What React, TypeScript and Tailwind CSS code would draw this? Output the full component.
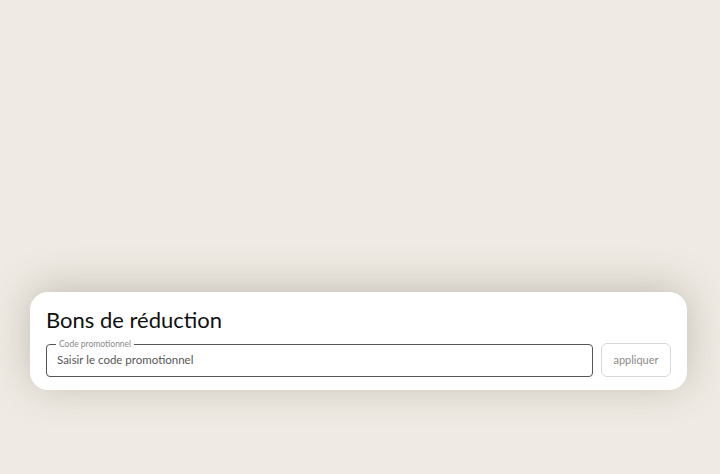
export default function App() {
  return (
    <div className="min-h-[474px] w-[720px] bg-[#efebe4] pt-[292px] font-['Lato',sans-serif]">
      <div className="mx-[30px] w-[657px] rounded-[18px] bg-white px-[16px] pb-[13px] pt-[14px] shadow-[0_-4px_40px_rgba(80,70,50,0.28)]">
        <h2 className="text-[22px] leading-[28px] text-[#0f1111]">Bons de réduction</h2>
        <div className="mt-[9px] flex items-center gap-[8px]">
          <div className="relative flex h-[33px] flex-1 items-center rounded-[4px] border-[1.5px] border-[#555555] px-[10px]">
            <span className="absolute -top-[6px] left-[9px] bg-white px-[3px] text-[8.5px] leading-[10px] text-[#8a8a8a]">
              Code promotionnel
            </span>
            <span className="text-[11.5px] leading-[14px] text-[#565656]">Saisir le code promotionnel</span>
          </div>
          <button className="h-[34px] w-[70px] rounded-[6px] border border-[#d9d9d9] text-[11px] text-[#8a8a8a]">
            appliquer
          </button>
        </div>
      </div>
    </div>
  );
}
